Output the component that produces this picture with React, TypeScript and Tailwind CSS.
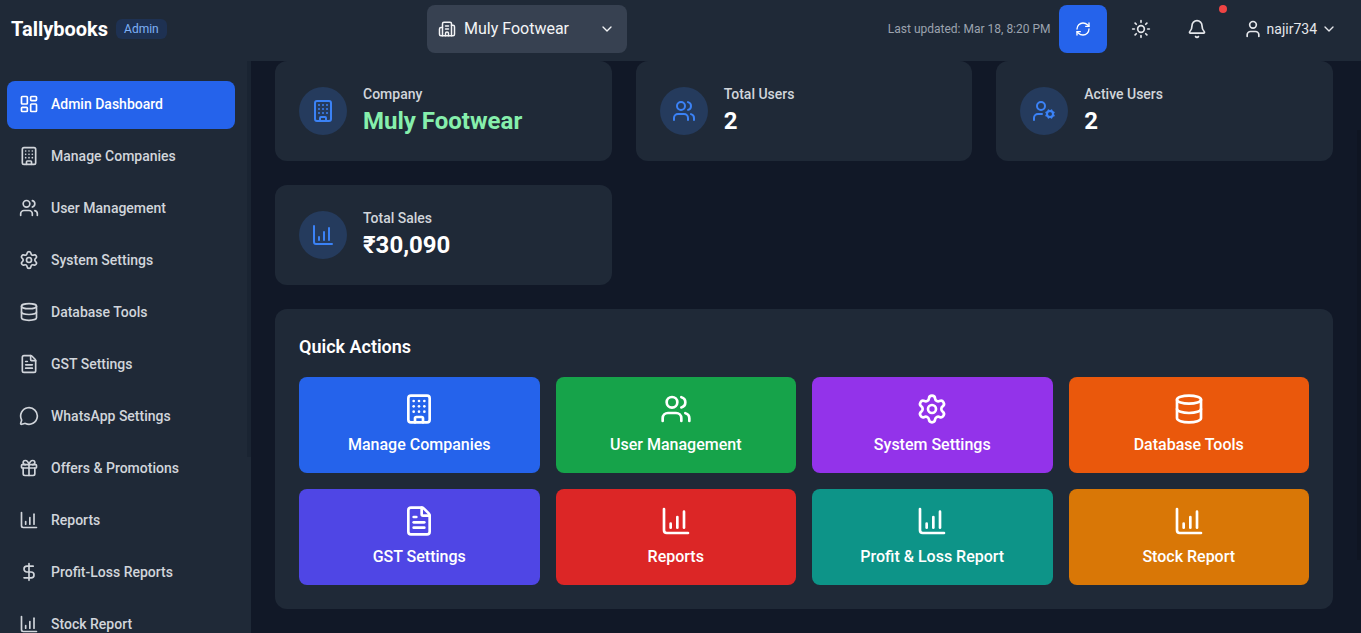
import React from 'react';
import {
  Building, Building2, Users, Settings, Database, FileText, MessageCircle, Gift, DollarSign,
  LayoutDashboard, ChevronDown, RefreshCw, Sun, Bell, User, UserCog, ChartColumnIncreasing,
} from 'lucide-react';

const navItems = [
  { label: 'Admin Dashboard', icon: LayoutDashboard, active: true },
  { label: 'Manage Companies', icon: Building },
  { label: 'User Management', icon: Users },
  { label: 'System Settings', icon: Settings },
  { label: 'Database Tools', icon: Database },
  { label: 'GST Settings', icon: FileText },
  { label: 'WhatsApp Settings', icon: MessageCircle },
  { label: 'Offers & Promotions', icon: Gift },
  { label: 'Reports', icon: ChartColumnIncreasing },
  { label: 'Profit-Loss Reports', icon: DollarSign },
  { label: 'Stock Report', icon: ChartColumnIncreasing },
];

const actions = [
  { label: 'Manage Companies', icon: Building, color: 'bg-[#2563eb]' },
  { label: 'User Management', icon: Users, color: 'bg-[#16a34a]' },
  { label: 'System Settings', icon: Settings, color: 'bg-[#9333ea]' },
  { label: 'Database Tools', icon: Database, color: 'bg-[#ea580c]' },
  { label: 'GST Settings', icon: FileText, color: 'bg-[#4f46e5]' },
  { label: 'Reports', icon: ChartColumnIncreasing, color: 'bg-[#dc2626]' },
  { label: 'Profit & Loss Report', icon: ChartColumnIncreasing, color: 'bg-[#0d9488]' },
  { label: 'Stock Report', icon: ChartColumnIncreasing, color: 'bg-[#d97706]' },
];

function StatCard({ icon: Icon, label, value, valueClass }: any) {
  return (
    <div className="bg-[#1f2937] rounded-xl p-6 h-[100px] flex items-center gap-4">
      <div className="w-12 h-12 rounded-full bg-[#253b5d] flex items-center justify-center text-[#3b82f6]">
        <Icon className="w-6 h-6" />
      </div>
      <div className="-mt-px">
        <p className="text-sm font-medium text-[#d1d5db] mb-px">{label}</p>
        <p className={`text-2xl font-bold ${valueClass || 'text-white'}`}>{value}</p>
      </div>
    </div>
  );
}

export default function App() {
  return (
    <div className="h-screen flex flex-col overflow-hidden bg-[#111827] font-['Roboto',sans-serif]">
      {/* Top bar */}
      <header className="h-[61px] shrink-0 bg-[#1f2937] flex items-center pb-[3px] relative">
        <div className="flex items-center pl-[11px]">
          <span className="text-xl font-bold text-white">Tallybooks</span>
          <span className="ml-2 px-2 py-0.5 rounded-md bg-[#1e3152] text-[#7fb2f8] text-xs">Admin</span>
        </div>
        <div className="absolute left-[427px] top-[5px] w-[200px] h-12 bg-[#374151] rounded-lg flex items-center pl-[11px] pr-3 text-[#f3f4f6]">
          <Building2 className="w-[18px] h-[18px]" />
          <span className="ml-2 text-base">Muly Footwear</span>
          <ChevronDown className="w-4 h-4 ml-auto" />
        </div>
        <div className="ml-auto flex items-center h-12 pr-6">
          <span className="text-xs text-[#9ca3af] mr-2">Last updated: Mar 18, 8:20 PM</span>
          <button className="w-12 h-12 rounded-lg bg-[#2563eb] flex items-center justify-center text-white">
            <RefreshCw className="w-4 h-4" />
          </button>
          <button className="w-12 h-12 ml-2.5 flex items-center justify-center text-[#e5e7eb]">
            <Sun className="w-5 h-5" />
          </button>
          <button className="w-12 h-12 ml-2 flex items-center justify-center text-[#e5e7eb] relative">
            <Bell className="w-5 h-5" />
            <span className="absolute top-0 right-[-6px] w-2 h-2 rounded-full bg-[#ef4444]" />
          </button>
          <div className="ml-[22px] flex items-center text-[#e5e7eb]">
            <User className="w-5 h-5" />
            <span className="ml-1 text-sm">najir734</span>
            <ChevronDown className="w-4 h-4 ml-1" />
          </div>
        </div>
      </header>

      <div className="flex flex-1 min-h-0">
        {/* Sidebar */}
        <aside className="w-[251px] shrink-0 bg-[#1f2937] flex overflow-hidden">
          <nav className="w-[247px] shrink-0 pt-5 pl-[7px] pr-3 flex flex-col gap-1">
            {navItems.map((item) => (
              <div
                key={item.label}
                className={`h-12 shrink-0 rounded-lg flex items-center gap-3 pl-3 pb-[2px] text-sm font-medium ${item.active ? 'bg-[#2563eb] text-white' : 'text-[#d1d5db]'}`}
              >
                <item.icon className="w-5 h-5 shrink-0" />
                <span>{item.label}</span>
              </div>
            ))}
          </nav>
          <div className="w-1 h-[396px] bg-[#1a2432] shrink-0" />
        </aside>

        {/* Main */}
        <main className="flex-1 min-w-0 flex overflow-hidden">
          <div className="flex-1 min-w-0 px-6">
            <div className="grid grid-cols-3 gap-6">
              <StatCard icon={Building} label="Company" value="Muly Footwear" valueClass="text-[#86efac]" />
              <StatCard icon={Users} label="Total Users" value="2" />
              <StatCard icon={UserCog} label="Active Users" value="2" />
              <StatCard icon={ChartColumnIncreasing} label="Total Sales" value="₹30,090" />
            </div>
            <section className="mt-6 bg-[#1f2937] rounded-xl p-6 h-[300px]">
              <h2 className="text-lg font-semibold text-white mb-4">Quick Actions</h2>
              <div className="grid grid-cols-4 gap-4">
                {actions.map((a) => (
                  <div key={a.label} className={`${a.color} h-24 rounded-lg flex flex-col items-center justify-center text-white`}>
                    <a.icon className="w-8 h-8 mb-2" />
                    <span className="font-medium">{a.label}</span>
                  </div>
                ))}
              </div>
            </section>
          </div>
          <div className="w-1 shrink-0 flex flex-col">
            <div className="mt-[69px] h-[430px] bg-[#0f1522]" />
          </div>
        </main>
      </div>
    </div>
  );
}
